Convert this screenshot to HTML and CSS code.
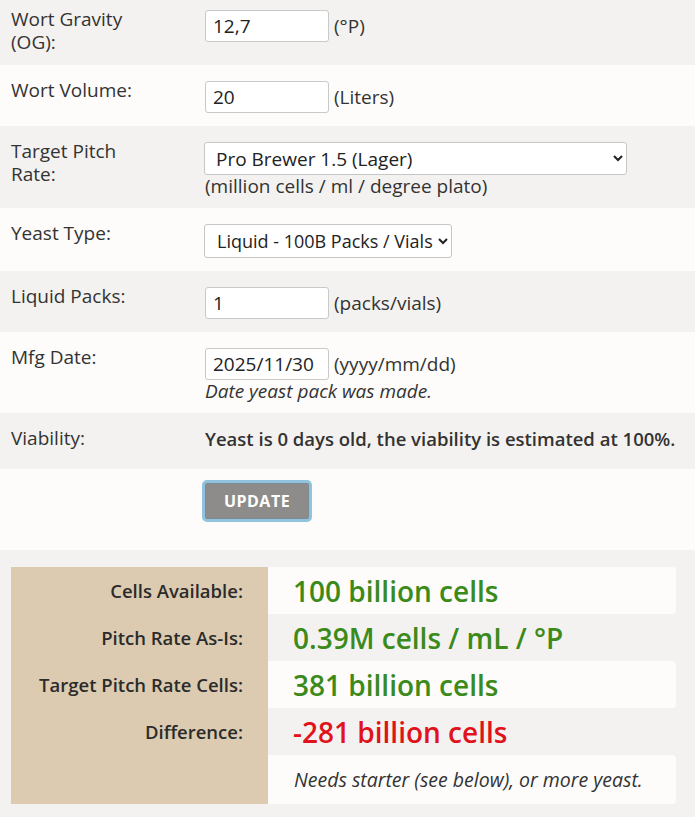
FILE: index.html
```html
<!DOCTYPE html>
<html>
<head>
<meta charset="utf-8">
<link rel="stylesheet" href="styles.css">
</head>
<body>
<div class="form">
  <div class="row alt first">
    <div class="label">Wort Gravity<br>(OG):</div>
    <div class="field"><div class="line"><input class="num" type="text" value="12,7"><span class="unit">(°P)</span></div></div>
  </div>
  <div class="row">
    <div class="label">Wort Volume:</div>
    <div class="field"><div class="line"><input class="num" type="text" value="20"><span class="unit">(Liters)</span></div></div>
  </div>
  <div class="row alt">
    <div class="label">Target Pitch<br>Rate:</div>
    <div class="field">
      <div class="line"><select class="sel wide"><option>Pro Brewer 1.5 (Lager)</option></select></div>
      <div class="note">(million cells / ml / degree plato)</div>
    </div>
  </div>
  <div class="row">
    <div class="label">Yeast Type:</div>
    <div class="field"><div class="line"><select class="sel type"><option>Liquid - 100B Packs / Vials</option></select></div></div>
  </div>
  <div class="row alt">
    <div class="label">Liquid Packs:</div>
    <div class="field"><div class="line"><input class="num" type="text" value="1"><span class="unit">(packs/vials)</span></div></div>
  </div>
  <div class="row">
    <div class="label">Mfg Date:</div>
    <div class="field">
      <div class="line"><input class="num" type="text" value="2025/11/30"><span class="unit">(yyyy/mm/dd)</span></div>
      <div class="note italic">Date yeast pack was made.</div>
    </div>
  </div>
  <div class="row alt viab">
    <div class="label">Viability:</div>
    <div class="field"><div class="bold-text">Yeast is 0 days old, the viability is estimated at 100%.</div></div>
  </div>
  <div class="row btn-row">
    <div class="label"></div>
    <div class="field"><button class="update">UPDATE</button></div>
  </div>
</div>
<div class="results">
  <div class="rbox">
    <div class="rrow light"><div class="rlabel">Cells Available:</div><div class="rval green">100 billion cells</div></div>
    <div class="rrow"><div class="rlabel">Pitch Rate As-Is:</div><div class="rval green">0.39M cells / mL / °P</div></div>
    <div class="rrow light"><div class="rlabel">Target Pitch Rate Cells:</div><div class="rval green">381 billion cells</div></div>
    <div class="rrow"><div class="rlabel">Difference:</div><div class="rval red">-281 billion cells</div></div>
    <div class="rrow light last"><div class="rlabel"></div><div class="rval msg">Needs starter (see below), or more yeast.</div></div>
  </div>
</div>
</body>
</html>
```
FILE: styles.css
```css
* { box-sizing: border-box; }
html, body { margin: 0; padding: 0; }
body {
  font-family: "Open Sans", "Noto Sans", sans-serif;
  font-size: 19px;
  color: #333;
  background: #f4f2f0;
  overflow: hidden;
}
.form { display: flex; flex-direction: column; }
.row {
  display: grid;
  grid-template-columns: 194px 1fr;
  padding: 14px 11px 11px 11px;
  background: #fdfcfa;
}
.row.alt { background: #f4f2f0; }
.row.first { margin-top: -6px; }
.label { line-height: 23px; padding-top: 0; }
.field { display: flex; flex-direction: column; }
.line { display: flex; align-items: center; margin: 2px 0; }
.num {
  width: 124px;
  height: 32px;
  border: 1px solid #c9c9c9;
  border-radius: 3px;
  background: #fff;
  font-family: inherit;
  font-size: 19px;
  color: #222;
  padding: 0 7px;
  margin: 0;
}
.unit { margin-left: 5px; line-height: 22px; }
.sel {
  height: 34px;
  border: 1px solid #c6c6c6;
  border-radius: 3px;
  background: #fff;
  font-family: inherit;
  font-size: 19px;
  color: #222;
  padding: 0 4px 0 7px;
  margin: 0 0 0 -1px;
}
.sel.wide { width: 423px; height: 33px; }
.sel.type { font-size: 18px; padding: 0 2px 0 8px; }
.note { line-height: 22px; margin-top: -2px; }
.italic { font-style: italic; }
.viab { padding-bottom: 19px; }
.bold-text { font-weight: 600; font-size: 18.5px; line-height: 22px; padding-top: 1px; white-space: nowrap; }
.btn-row { padding: 11px 11px 28px 11px; }
.update {
  margin-left: -3px;
  width: 110px;
  height: 42px;
  border: 3px solid #8fc3de;
  border-radius: 5px;
  background: #8e8c8a;
  color: #fff;
  font-family: inherit;
  font-weight: 700;
  font-size: 16px;
  letter-spacing: 0.5px;
  box-shadow: inset 0 0 0 1px #7d8a92;
  padding: 0;
}
.results { padding: 17px 19px 12px 11px; background: #f4f2f0; }
.rbox { display: flex; flex-direction: column; }
.rrow { display: grid; grid-template-columns: 257px 1fr; height: 47px; }
.rrow.last { height: 49px; }
.rlabel {
  background: #dccbb0;
  font-weight: 600;
  font-size: 18.5px;
  text-align: right;
  padding-right: 25px;
  display: flex;
  align-items: center;
  justify-content: flex-end;
  color: #2b2b2b;
}
.rval {
  display: flex;
  align-items: center;
  padding-left: 25px;
  font-size: 28px;
  font-weight: 600;
  border-radius: 0 4px 4px 0;
}
.rrow.light .rval { background: #fdfcfa; }
.green { color: #3b8a1a; }
.red { color: #e0121c; }
.msg { font-size: 19.5px; font-weight: 400; font-style: italic; color: #333; padding-left: 26px; }
```
